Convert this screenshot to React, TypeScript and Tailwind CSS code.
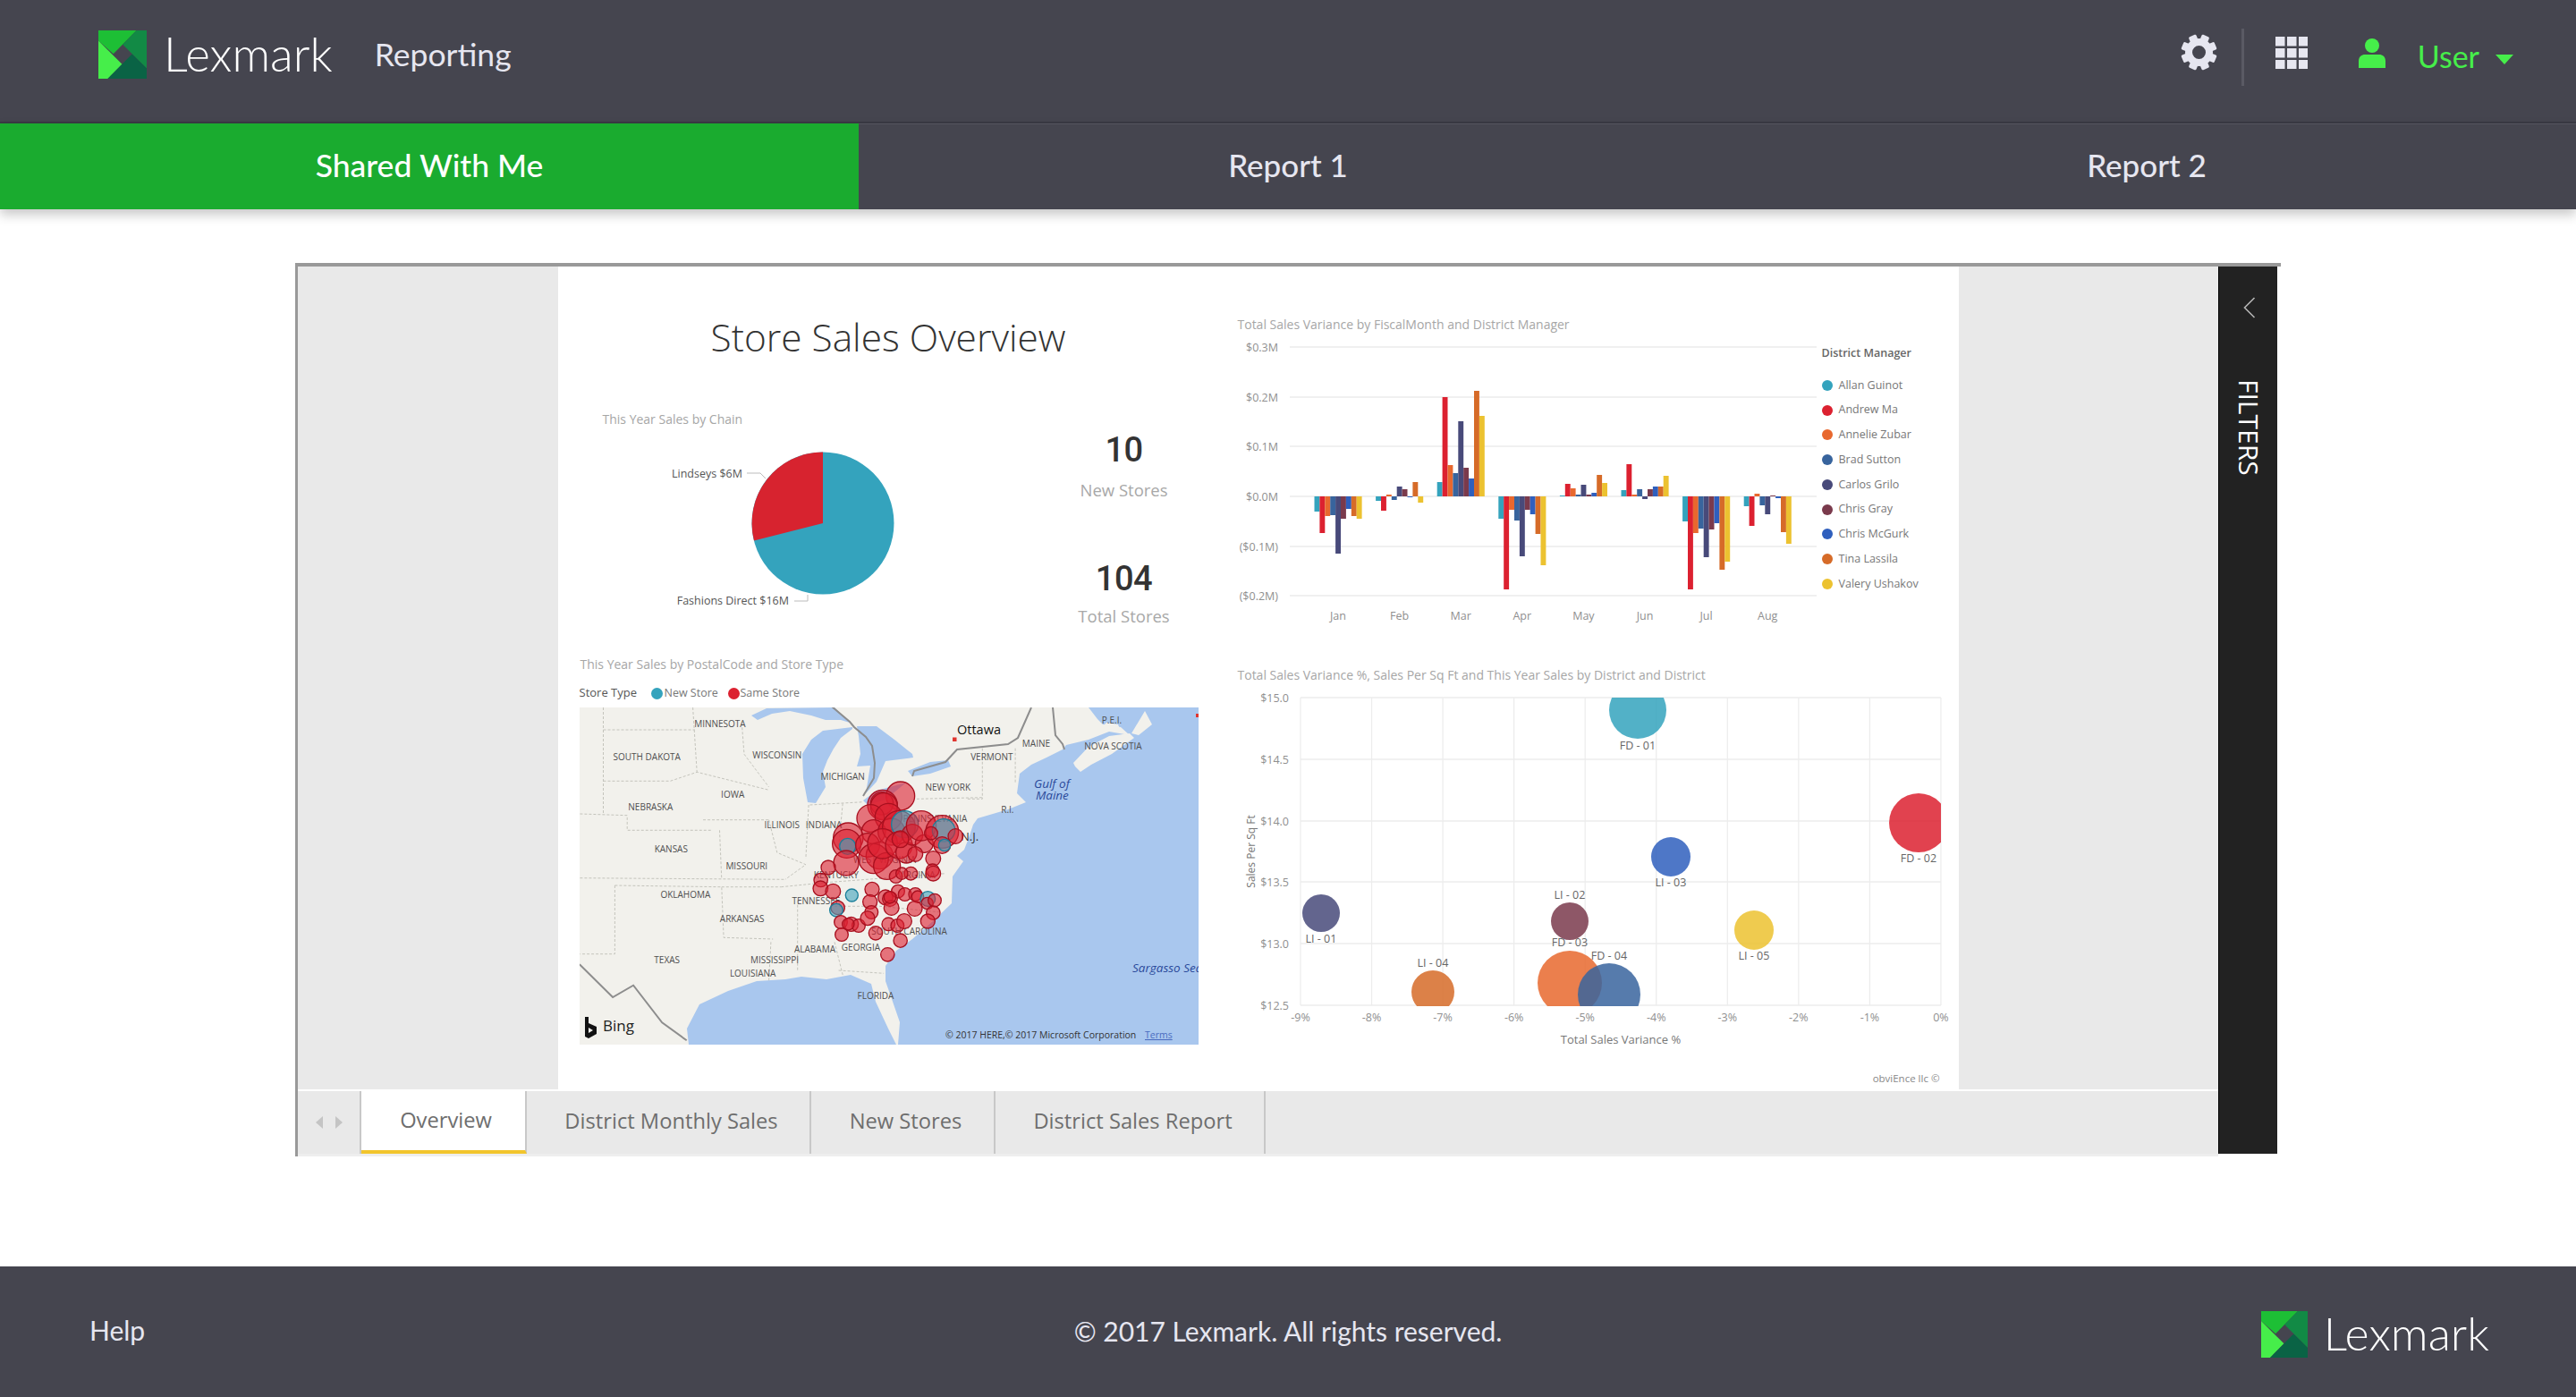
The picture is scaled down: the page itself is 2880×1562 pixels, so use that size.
const COLORS = ["#34a3bd", "#dc2130", "#e8682e", "#38649d", "#484a7a", "#7a3a4c", "#2f5fbd", "#d66b28", "#ecc230"];
const MANAGERS = ["Allan Guinot", "Andrew Ma", "Annelie Zubar", "Brad Sutton", "Carlos Grilo", "Chris Gray", "Chris McGurk", "Tina Lassila", "Valery Ushakov"];

// bar heights in px, up from the zero line
const MONTHS: [string, number[]][] = [
  ["Jan", [-17, -41, -22, -21, -64, -25, -14, -22, -25]],
  ["Feb", [-5, -16, 2, -4, 11, 8, -1, 16, -7]],
  ["Mar", [16, 111, 35, 26, 84, 32, 20, 118, 90]],
  ["Apr", [-25, -104, -15, -27, -67, -15, -20, -42, -77]],
  ["May", [1, 14, 9, 2, 13, 2, 4, 24, 15]],
  ["Jun", [7, 36, 2, 8, -3, 8, 11, 11, 23]],
  ["Jul", [-28, -104, -41, -36, -68, -37, -30, -82, -73]],
  ["Aug", [-11, -33, 3, -10, -20, 1, -2, -40, -53]],
];

const BUBBLES = [
  { label: "FD - 01", x: 471, y: 29, r: 32, c: COLORS[0], ly: 73 },
  { label: "FD - 02", x: 785, y: 155, r: 33, c: COLORS[1], ly: 199 },
  { label: "LI - 03", x: 508, y: 193, r: 22, c: COLORS[6], ly: 226 },
  { label: "LI - 01", x: 117, y: 256, r: 21, c: COLORS[4], ly: 289 },
  { label: "LI - 02", x: 395, y: 265, r: 21, c: COLORS[5], ly: 240 },
  { label: "LI - 05", x: 601, y: 275, r: 22, c: COLORS[8], ly: 308 },
  { label: "LI - 04", x: 242, y: 344, r: 24, c: COLORS[7], ly: 316 },
  { label: "FD - 03", x: 395, y: 334, r: 36, c: COLORS[2], ly: 293 },
  { label: "FD - 04", x: 439, y: 347, r: 35, c: COLORS[3], ly: 308 },
];

// state lines and labels were traced in a crop, mp brings them to map coordinates
const mp = (pts: number[][]) => pts.map(([x, y]) => `${(x / 2.178 - 18).toFixed(1)},${(y / 3 - 71).toFixed(1)}`).join(" ");
const pt = (pts: number[][]) => pts.map(([x, y]) => `${x},${y}`).join(" ");

const WATER = [
  // atlantic, from new brunswick round to florida
  [[692, 0], [569, 0], [579, 13], [585, 19], [605, 22], [615, 31], [592, 27], [569, 36], [544, 42], [540, 47], [522, 56], [505, 64], [492, 74], [489, 96], [499, 106], [479, 114], [462, 119], [445, 124], [440, 131], [435, 146], [430, 159], [422, 166], [429, 172], [417, 189], [416, 219], [395, 239], [372, 259], [354, 272], [342, 289], [342, 306], [349, 326], [358, 352], [356, 377], [692, 377]],
  // gulf of mexico
  [[122, 377], [120, 359], [134, 332], [166, 317], [198, 306], [230, 304], [248, 301], [276, 304], [303, 299], [326, 309], [331, 329], [345, 359], [354, 377]],
  // great lakes
  [[192, 9], [209, 1], [285, 0], [302, 17], [292, 14], [275, 14], [259, 9], [235, 4], [215, 7], [199, 14]],
  [[305, 22], [272, 26], [259, 36], [249, 52], [250, 79], [255, 106], [264, 107], [275, 89], [272, 72], [277, 59], [284, 46], [292, 34], [305, 24]],
  [[310, 21], [332, 21], [352, 36], [372, 52], [373, 56], [342, 60], [332, 83], [320, 96], [325, 65], [310, 66], [314, 52], [312, 32]],
  [[317, 104], [332, 93], [365, 84], [342, 103], [322, 109]],
  [[367, 71], [392, 61], [412, 59], [415, 66], [392, 74], [372, 77]],
];

const ISLANDS = [
  [[552, 62], [569, 44], [592, 32], [615, 29], [620, 34], [595, 52], [572, 64], [560, 72], [554, 66]],
  [[617, 29], [632, 4], [640, 19], [625, 31]],
  [[589, 17], [602, 19], [604, 24], [585, 21]],
];

const BORDERS = [
  [[282, -1], [302, 16], [307, 22], [320, 33], [327, 43], [330, 62], [329, 79], [317, 99]],
  [[372, 77], [374, 71], [409, 61], [422, 47], [479, 41], [490, 34], [505, 0]],
  [[529, 0], [532, 31], [540, 41], [542, 47]],
];

const MEXICO = [[39, 1075], [120, 1185], [170, 1145], [240, 1270], [300, 1330]];

const STATE_LINES = [
  [[97, 213], [97, 570]], [[315, 213], [325, 430]], [[97, 288], [320, 288]], [[97, 460], [260, 460], [325, 430], [500, 490]],
  [[40, 570], [155, 575], [155, 625], [360, 625]], [[340, 590], [500, 590]], [[380, 625], [385, 790]], [[40, 785], [540, 790]],
  [[125, 810], [125, 1040], [40, 1040]], [[125, 810], [385, 815], [390, 985], [510, 990]], [[385, 815], [530, 815]],
  [[500, 590], [520, 700], [590, 740], [540, 790]], [[597, 540], [590, 720]], [[680, 535], [670, 680]], [[600, 540], [730, 530]],
  [[530, 815], [640, 800], [930, 770]], [[570, 860], [570, 1100]], [[660, 1000], [680, 1110]], [[505, 1000], [500, 1130]],
  [[435, 280], [440, 370], [500, 480]], [[1020, 350], [1020, 520], [980, 520]], [[860, 520], [1020, 515]], [[1100, 350], [1100, 470]],
  [[670, 1095], [780, 1105]], [[660, 880], [770, 880], [920, 900]],
];

const STATE_LABELS: [string, number, number][] = [
  ["MINNESOTA", 381, 269], ["SOUTH DAKOTA", 203, 379], ["WISCONSIN", 520, 372], ["MICHIGAN", 680, 445], ["IOWA", 412, 504],
  ["NEBRASKA", 212, 548], ["ILLINOIS", 532, 606], ["INDIANA", 634, 606], ["KANSAS", 262, 687], ["MISSOURI", 446, 746],
  ["OKLAHOMA", 297, 841], ["ARKANSAS", 435, 921], ["TENNESSEE", 615, 863], ["ALABAMA", 612, 1024], ["GEORGIA", 724, 1017],
  ["MISSISSIPPI", 514, 1061], ["TEXAS", 252, 1061], ["LOUISIANA", 461, 1105], ["FLORIDA", 760, 1179], ["NEW YORK", 936, 482],
  ["VERMONT", 1043, 379], ["MAINE", 1151, 335], ["NOVA SCOTIA", 1338, 343], ["P.E.I.", 1335, 255], ["R.I.", 1081, 556],
  ["KENTUCKY", 664, 775], ["SOUTH CAROLINA", 842, 965], ["WEST VIRGINIA", 782, 724], ["VIRGINIA", 860, 775], ["PENNSYLVANIA", 905, 585],
];

// stores, in the 3x crop around the east coast
const STORES: [number, number, number, number?][] = [
  [380, 180, 48], [320, 210, 50], [318, 205, 38], [325, 215, 45], [280, 255, 46], [340, 250, 45], [290, 300, 40], [350, 300, 45], [375, 285, 55],
  [395, 275, 45, 1], [205, 320, 50], [200, 340, 48], [203, 349, 27, 1], [198, 405, 42], [270, 345, 40], [310, 380, 45], [290, 390, 50], [335, 415, 45],
  [320, 340, 50], [375, 345, 45], [400, 370, 35], [420, 310, 35], [460, 340, 30], [380, 325, 28],
  [450, 280, 50], [520, 300, 55], [525, 295, 38, 1], [565, 315, 25], [520, 345, 28], [528, 345, 20, 1], [483, 305, 22], [490, 390, 25],
  [488, 430, 22], [490, 440, 25], [430, 375, 25], [365, 450, 22], [415, 440, 22], [385, 440, 20], [138, 420, 24], [113, 462, 23],
  [112, 490, 25], [154, 500, 25], [217, 513, 21, 1], [285, 493, 24], [278, 535, 24], [170, 555, 23], [165, 563, 22, 1], [180, 603, 22],
  [215, 610, 24], [240, 615, 22], [205, 610, 20], [183, 645, 22], [283, 570, 22], [270, 590, 24], [297, 640, 23], [340, 610, 22],
  [370, 615, 22], [393, 600, 25], [380, 665, 23], [337, 712, 23], [330, 520, 25], [345, 525, 25], [350, 555, 25], [372, 500, 22],
  [395, 510, 22], [345, 520, 20], [430, 510, 22], [438, 518, 20], [472, 525, 25, 1], [470, 540, 20], [495, 530, 22], [428, 558, 25],
  [490, 572, 23], [472, 600, 24],
];

function Logo({ size }: { size: number }) {
  return (
    <svg width={size} height={size} viewBox="0 0 155 155" className="shrink-0" aria-hidden>
      <polygon points="0,0 122,0 48,75 0,33" fill="#1dbf35" />
      <polygon points="0,33 76,108 30,155 0,155" fill="#46ee4a" />
      <polygon points="122,0 155,0 155,122 78,45" fill="#128a45" />
      <polygon points="108,76 155,122 155,155 30,155" fill="#0a6345" />
    </svg>
  );
}

function Gear() {
  return (
    <svg width="41" height="41" viewBox="0 0 41 41" aria-hidden>
      {[0, 45, 90, 135, 180, 225, 270, 315].map((a) => (
        <rect key={a} x="16" y="0.5" width="9" height="9" rx="1.5" fill="#e6e6f0" transform={`rotate(${a + 22.5} 20.5 20.5)`} />
      ))}
      <circle cx="20.5" cy="20.5" r="11.5" fill="none" stroke="#e6e6f0" strokeWidth="8" />
    </svg>
  );
}

function AppsGrid() {
  return (
    <svg width="36" height="36" viewBox="0 0 36 36" aria-hidden>
      {[0, 13, 26].map((y) =>
        [0, 13, 26].map((x) => <rect key={`${x}-${y}`} x={x} y={y} width="10.5" height="10.5" fill="#e6e6f0" />),
      )}
    </svg>
  );
}

function PersonIcon() {
  return (
    <svg width="30" height="33" viewBox="0 0 30 33" aria-hidden>
      <circle cx="15" cy="8" r="8" fill="#46ee4a" />
      <path d="M0 33V25c0-4.5 3.5-7 7-7h16c3.5 0 7 2.5 7 7v8z" fill="#46ee4a" />
    </svg>
  );
}

function BarChart() {
  const zero = 182;
  return (
    <svg width="672" height="327" viewBox="0 0 672 327" className="shrink-0 font-['Open_Sans',sans-serif]" aria-hidden>
      {[
        ["$0.3M", 15], ["$0.2M", 71], ["$0.1M", 126], ["$0.0M", 182], ["($0.1M)", 238], ["($0.2M)", 293],
      ].map(([t, y]) => (
        <g key={t}>
          <line x1="82" x2="671" y1={y} y2={y} stroke="#ebebeb" strokeWidth="1.5" />
          <text x="69" y={Number(y) + 4.5} textAnchor="end" className="fill-[#8f8f8f] text-[12.5px]">{t}</text>
        </g>
      ))}
      {MONTHS.map(([m, vals], i) => {
        const cx = 136 + i * 68.6;
        return (
          <g key={m}>
            {vals.map((v, j) => (
              <rect key={j} x={cx - 26.5 + j * 5.9} y={v > 0 ? zero - v : zero} width="5.9" height={Math.abs(v)} fill={COLORS[j]} />
            ))}
            <text x={cx} y="320" textAnchor="middle" className="fill-[#8f8f8f] text-[12.5px]">{m}</text>
          </g>
        );
      })}
    </svg>
  );
}

function BubbleChart() {
  const xs = Array.from({ length: 10 }, (_, i) => 94 + i * 79.55);
  const ys = [15, 84, 153, 221, 290, 359];
  const yLabels = ["$15.0", "$14.5", "$14.0", "$13.5", "$13.0", "$12.5"];
  return (
    <svg width="830" height="410" viewBox="0 0 830 410" className="font-['Open_Sans',sans-serif]" aria-hidden>
      <defs>
        <clipPath id="plot">
          <rect x="94" y="15" width="716" height="345" />
        </clipPath>
      </defs>
      {xs.map((x, i) => (
        <g key={x}>
          <line x1={x} x2={x} y1="15" y2="359" stroke="#ececec" strokeWidth="1.2" />
          <text x={x} y="377" textAnchor="middle" className="fill-[#8f8f8f] text-[12.5px]">{`${i === 9 ? "" : "-"}${9 - i}%`}</text>
        </g>
      ))}
      {ys.map((y, i) => (
        <g key={y}>
          <line x1="94" x2="810" y1={y} y2={y} stroke="#ececec" strokeWidth="1.5" />
          <text x="81" y={y + 4.5} textAnchor="end" className="fill-[#8f8f8f] text-[12.5px]">{yLabels[i]}</text>
        </g>
      ))}
      <g clipPath="url(#plot)">
        {BUBBLES.map((b) => (
          <circle key={b.label} cx={b.x} cy={b.y} r={b.r} fill={b.c} fillOpacity="0.85" />
        ))}
      </g>
      {BUBBLES.map((b) => (
        <text key={b.label} x={b.x} y={b.ly} textAnchor="middle" className="fill-[#666] text-[12.5px]">{b.label}</text>
      ))}
      <text x="452" y="402" textAnchor="middle" className="fill-[#777] text-[13px]">Total Sales Variance %</text>
      <text transform="translate(43 187) rotate(-90)" textAnchor="middle" className="fill-[#777] text-[12px]">Sales Per Sq Ft</text>
    </svg>
  );
}

function StoreMap() {
  return (
    <svg width="692" height="377" viewBox="0 0 692 377" className="ml-[24px] block shrink-0 bg-[#f2f1ec] font-['Open_Sans',sans-serif]" aria-hidden>
      {WATER.map((p, i) => (
        <polygon key={i} points={pt(p)} fill="#a9c7ee" />
      ))}
      {ISLANDS.map((p, i) => (
        <polygon key={i} points={pt(p)} fill="#f2f1ec" />
      ))}
      {STATE_LINES.map((p, i) => (
        <polyline key={i} points={mp(p)} fill="none" stroke="#c4c4bc" strokeWidth="1" strokeDasharray="3 2" />
      ))}
      {BORDERS.map((p, i) => (
        <polyline key={i} points={pt(p)} fill="none" stroke="#8d8d8d" strokeWidth="2" />
      ))}
      <polyline points={mp(MEXICO)} fill="none" stroke="#8d8d8d" strokeWidth="2" />
      {STATE_LABELS.map(([t, x, y]) => (
        <text key={t} x={x / 2.178 - 18} y={y / 3 - 71 + 3.5} textAnchor="middle" className="fill-[#4f4f4f] text-[10px]">{t}</text>
      ))}
      <text x="422" y="30" className="fill-[#111] text-[14.5px]">Ottawa</text>
      <rect x="417" y="33.5" width="4.5" height="4.5" fill="#e0352f" />
      <rect x="689" y="7" width="3" height="4" fill="#e0352f" />
      <text x="436" y="149" textAnchor="middle" className="fill-[#333] text-[13px]">N.J.</text>
      <text x="508" y="90" className="fill-[#2b4a9b] text-[13.5px] italic">Gulf of</text>
      <text x="510" y="103" className="fill-[#2b4a9b] text-[13.5px] italic">Maine</text>
      <text x="618" y="296" className="fill-[#2b4a9b] text-[13.5px] italic">Sargasso Sea</text>
      <g transform="translate(232 39) scale(0.3333)">
        {STORES.map(([x, y, r, teal], i) => (
          <circle
            key={i}
            cx={x}
            cy={y}
            r={r}
            fill={teal ? "#3fa3bd" : "#dc1f30"}
            fillOpacity={0.6}
            stroke={teal ? "#1a7f9a" : "#a8101f"}
            strokeWidth="4"
          />
        ))}
      </g>
      <path d="M6 346h4v7l9 4v8l-9 5-4-2z M10 358v6l5-3z" fill="#111" fillRule="evenodd" />
      <text x="26" y="362" className="fill-[#222] text-[17px]">Bing</text>
      <text x="409" y="370" className="fill-[#333] text-[10.5px]">© 2017 HERE,© 2017 Microsoft Corporation</text>
      <text x="632" y="370" className="fill-[#4a6cc0] text-[10.5px] underline">Terms</text>
    </svg>
  );
}

function ReportPage() {
  return (
    <div className="flex h-[920px] w-[1566px] bg-white font-['Open_Sans',sans-serif]">
      <div className="flex w-[736px] shrink-0 flex-col">
        <h1 className="mt-[49px] mb-px h-[60px] pl-[3px] text-center text-[42.4px] leading-[60px] font-light text-[#333]">Store Sales Overview</h1>
        <div className="flex h-[325px]">
          <div className="w-[533px] shrink-0">
            <p className="mt-[51px] ml-[50px] h-5 text-[14px] leading-5 text-[#a6a6a6]">This Year Sales by Chain</p>
            <svg width="533" height="220" viewBox="0 0 533 220" className="mt-[10px] block" aria-hidden>
              <circle cx="296" cy="96" r="79.5" fill="#34a3bd" />
              <path d="M296 96V16.5A79.5 79.5 0 0 0 219 115.5z" fill="#d7232f" />
              <polyline points="211,40 226,40 232,46" fill="none" stroke="#bbb" />
              <polyline points="264,183 279,183 279,176" fill="none" stroke="#bbb" />
              <text x="206" y="44.5" textAnchor="end" className="fill-[#555] text-[12.5px] font-medium">Lindseys $6M</text>
              <text x="258" y="186.5" textAnchor="end" className="fill-[#555] text-[12.5px] font-medium">Fashions Direct $16M</text>
            </svg>
          </div>
          <div className="flex w-[200px] flex-col items-center font-['Roboto',sans-serif]">
            <p className="mt-[71px] h-12 text-[38px] leading-[48px] font-medium tracking-[-0.5px] text-[#333]">10</p>
            <p className="mt-[9px] h-6 font-['Open_Sans',sans-serif] text-[18.5px] leading-6 text-[#a8a8a8]">New Stores</p>
            <p className="mt-[63px] h-12 text-[38px] leading-[48px] font-medium tracking-[-0.5px] text-[#333]">104</p>
            <p className="mt-[6px] h-6 font-['Open_Sans',sans-serif] text-[18.5px] leading-6 text-[#a8a8a8]">Total Stores</p>
          </div>
        </div>
        <p className="ml-[25px] h-5 text-[14px] leading-5 text-[#a6a6a6]">This Year Sales by PostalCode and Store Type</p>
        <div className="mt-[12px] mb-px ml-[24px] flex h-5 items-center text-[12.5px] text-[#777]">
          <span className="w-[80px] text-[13px] font-medium text-[#555]">Store Type</span>
          <span className="h-[13px] w-[13px] rounded-full bg-[#34a3bd]" />
          <span className="ml-[2px] w-[71px]">New Store</span>
          <span className="h-[13px] w-[13px] rounded-full bg-[#dc2130]" />
          <span className="ml-[1px]">Same Store</span>
        </div>
        <div className="mt-[5px]">
          <StoreMap />
        </div>
      </div>
      <div className="flex flex-1 flex-col">
        <p className="mt-[55px] ml-[24px] h-5 text-[14px] leading-5 text-[#a6a6a6]">Total Sales Variance by FiscalMonth and District Manager</p>
        <div className="flex h-[327px]">
          <BarChart />
          <div className="ml-[5px] flex-1 pt-[12px]">
            <p className="h-5 text-[12.5px] leading-5 font-semibold text-[#666]">District Manager</p>
            <ul className="mt-[12px]">
              {MANAGERS.map((m, i) => (
                <li key={m} className="flex h-[27.75px] items-center text-[12.5px] text-[#777]">
                  <span className="mr-[7px] h-3 w-3 rounded-full" style={{ backgroundColor: COLORS[i] }} />
                  {m}
                </li>
              ))}
            </ul>
          </div>
        </div>
        <p className="mt-[45px] ml-[24px] h-5 text-[14px] leading-5 text-[#a6a6a6]">Total Sales Variance %, Sales Per Sq Ft and This Year Sales by District and District</p>
        <BubbleChart />
        <p className="mt-[21px] h-5 pr-[21px] text-right text-[11.5px] leading-5 text-[#888]">obviEnce llc ©</p>
      </div>
    </div>
  );
}

function ReportFrame() {
  const tabs = [
    { label: "District Monthly Sales", w: "w-[318px]" },
    { label: "New Stores", w: "w-[206px]" },
    { label: "District Sales Report", w: "w-[302px]" },
  ];
  return (
    <div className="mx-auto flex w-[2220px] border-t-4 border-l-[3px] border-[#999]">
      <div className="flex min-w-0 flex-1 flex-col">
        <div className="flex h-[920px] justify-center bg-[#e9e9e9]">
          <ReportPage />
        </div>
        <div className="mt-[2px] flex h-[70px] bg-[#e9e9e9] font-['Open_Sans',sans-serif] text-[23.7px] text-[#6e6e6e]">
          <div className="flex w-[71px] items-center justify-center gap-[14px] border-r-2 border-[#c8c8c8] text-[#c4c4c4]">
            <span className="h-0 w-0 border-y-[7px] border-r-[8px] border-y-transparent border-r-current" />
            <span className="h-0 w-0 border-y-[7px] border-l-[8px] border-y-transparent border-l-current" />
          </div>
          <div className="flex w-[185px] items-center justify-center border-r-2 border-b-4 border-r-[#c8c8c8] border-b-[#f2c52c] bg-white pl-[6px]">Overview</div>
          {tabs.map((t) => (
            <div key={t.label} className={`flex items-center justify-center border-r-2 border-[#c8c8c8] pb-[2px] pl-[7px] ${t.w}`}>
              {t.label}
            </div>
          ))}
        </div>
        <div className="h-[3px] bg-[#eeeeee]" />
      </div>
      <div className="flex w-[70px] shrink-0 flex-col">
        <div className="mr-[4px] flex h-[992px] flex-col items-center border-l border-black bg-[#222]">
          <svg width="14" height="24" viewBox="0 0 14 24" className="mt-[34px] ml-[3px]" aria-hidden>
            <polyline points="12.5,1 1.5,12 12.5,23" fill="none" stroke="#b5b5b5" strokeWidth="1.6" />
          </svg>
          <span className="mt-[68px] font-['Open_Sans',sans-serif] text-[30px] leading-none text-white [writing-mode:vertical-rl]">FILTERS</span>
        </div>
      </div>
    </div>
  );
}

export default function App() {
  return (
    <div className="flex h-[1562px] flex-col overflow-hidden bg-white font-['Lato',sans-serif]">
      <header className="flex h-[138px] items-start border-b-2 border-[#3a3a44] bg-[#45454f] text-[#e6e6f0]">
        <div className="mt-[34px] ml-[110px] flex items-center">
          <Logo size={54} />
          <span className="mt-[-3px] ml-[19px] text-[53px] leading-[54px] font-light text-white">Lexmark</span>
          <span className="ml-[47px] text-[35.5px] leading-[54px]">Reporting</span>
        </div>
        <div className="mt-[32px] ml-auto flex h-[64px] items-start">
          <div className="mt-[6px]">
            <Gear />
          </div>
          <div className="mr-[35px] ml-[27px] h-[64px] w-[3px] bg-[#5a5a64]" />
          <div className="mt-[9px]">
            <AppsGrid />
          </div>
          <div className="mt-[11px] ml-[57px]">
            <PersonIcon />
          </div>
          <span className="mt-[11px] ml-[36px] text-[34px] leading-[40px] text-[#46ee4a]">User</span>
          <span className="mt-[29px] mr-[70px] ml-[18px] h-0 w-0 border-x-[10px] border-t-[11px] border-x-transparent border-t-[#46ee4a]" />
        </div>
      </header>
      <nav className="relative z-10 grid h-[96px] grid-cols-3 text-[35px] font-medium text-[#e6e6f0] shadow-[0_6px_12px_rgba(0,0,0,0.22)]">
        <div className="flex items-center justify-center bg-[#1aab2f] pb-[3px] text-[35.5px] text-white">Shared With Me</div>
        <div className="flex items-center justify-center border-t border-[#55555f] bg-[#45454f] pb-[4px]">Report 1</div>
        <div className="flex items-center justify-center border-t border-[#55555f] bg-[#45454f] pb-[4px]">Report 2</div>
      </nav>
      <main className="flex-1 pt-[60px]">
        <ReportFrame />
      </main>
      <footer className="relative flex h-[146px] items-center bg-[#45454f] text-[30px] text-[#e6e6f0]">
        <span className="mb-[3px] ml-[100px]">Help</span>
        <span className="absolute top-[54px] left-1/2 -translate-x-1/2 leading-[36px]">© 2017 Lexmark. All rights reserved.</span>
        <div className="mt-[6px] mr-[97px] ml-auto flex items-center">
          <Logo size={52} />
          <span className="mt-[-4px] ml-[18px] text-[52px] leading-[52px] font-light text-white">Lexmark</span>
        </div>
      </footer>
    </div>
  );
}
